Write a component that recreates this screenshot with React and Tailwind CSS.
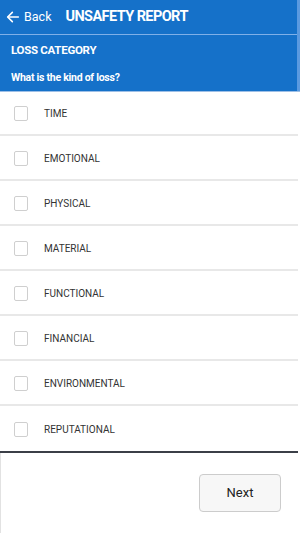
const categories = [
  "TIME",
  "EMOTIONAL",
  "PHYSICAL",
  "MATERIAL",
  "FUNCTIONAL",
  "FINANCIAL",
  "ENVIRONMENTAL",
  "REPUTATIONAL",
];

export default function App() {
  return (
    <div className="flex h-[533px] w-[300px] flex-col bg-white font-['Roboto',sans-serif]">
      <header className="border-r-[3px] border-r-[#5b9ae0] bg-[#1571c9] text-white shadow-[0_1px_0_#9dbfe6]">
        <div className="flex h-[35px] items-center border-b border-[#7fb0e8] pl-[5px]">
          <button type="button" className="flex items-center gap-[3px] text-[12.5px]">
            <svg width="16" height="16" viewBox="0 0 24 24" fill="none" stroke="currentColor" strokeWidth="2.4" strokeLinecap="round" strokeLinejoin="round">
              <path d="M20 12H5" />
              <path d="M11 5l-7 7 7 7" />
            </svg>
            Back
          </button>
          <h1 className="ml-[14px] text-[14.5px] font-bold tracking-[-0.04em]">UNSAFETY REPORT</h1>
        </div>
        <div className="h-[56px] px-[11px] pt-[8px]">
          <p className="text-[11.5px] font-bold leading-[14px] tracking-tight">LOSS CATEGORY</p>
          <p className="mt-[14px] text-[10.5px] font-bold leading-[14px] tracking-tight">What is the kind of loss?</p>
        </div>
      </header>
      <ul className="mr-[2px] border-b-2 border-[#3b3f47]">
        {categories.map((name, i) => (
          <li
            key={name}
            className={`flex h-[45px] items-center gap-[16px] pl-[14px] pt-[2px] ${i < categories.length - 1 ? "border-b-2 border-[#e8e8e8]" : ""}`}
          >
            <span className="h-[15px] w-[14px] rounded-[2px] border border-[#cfcfcf] bg-white" />
            <span className="text-[10px] text-[#333]">{name}</span>
          </li>
        ))}
      </ul>
      <footer className="flex flex-1 items-start justify-end border-l border-[#e2e2e2] pr-[19px] pt-[21px]">
        <button
          type="button"
          className="h-[38px] w-[82px] rounded-[4px] border border-[#cccccc] bg-[#f7f7f7] text-[13px] text-[#222]"
        >
          Next
        </button>
      </footer>
    </div>
  );
}
